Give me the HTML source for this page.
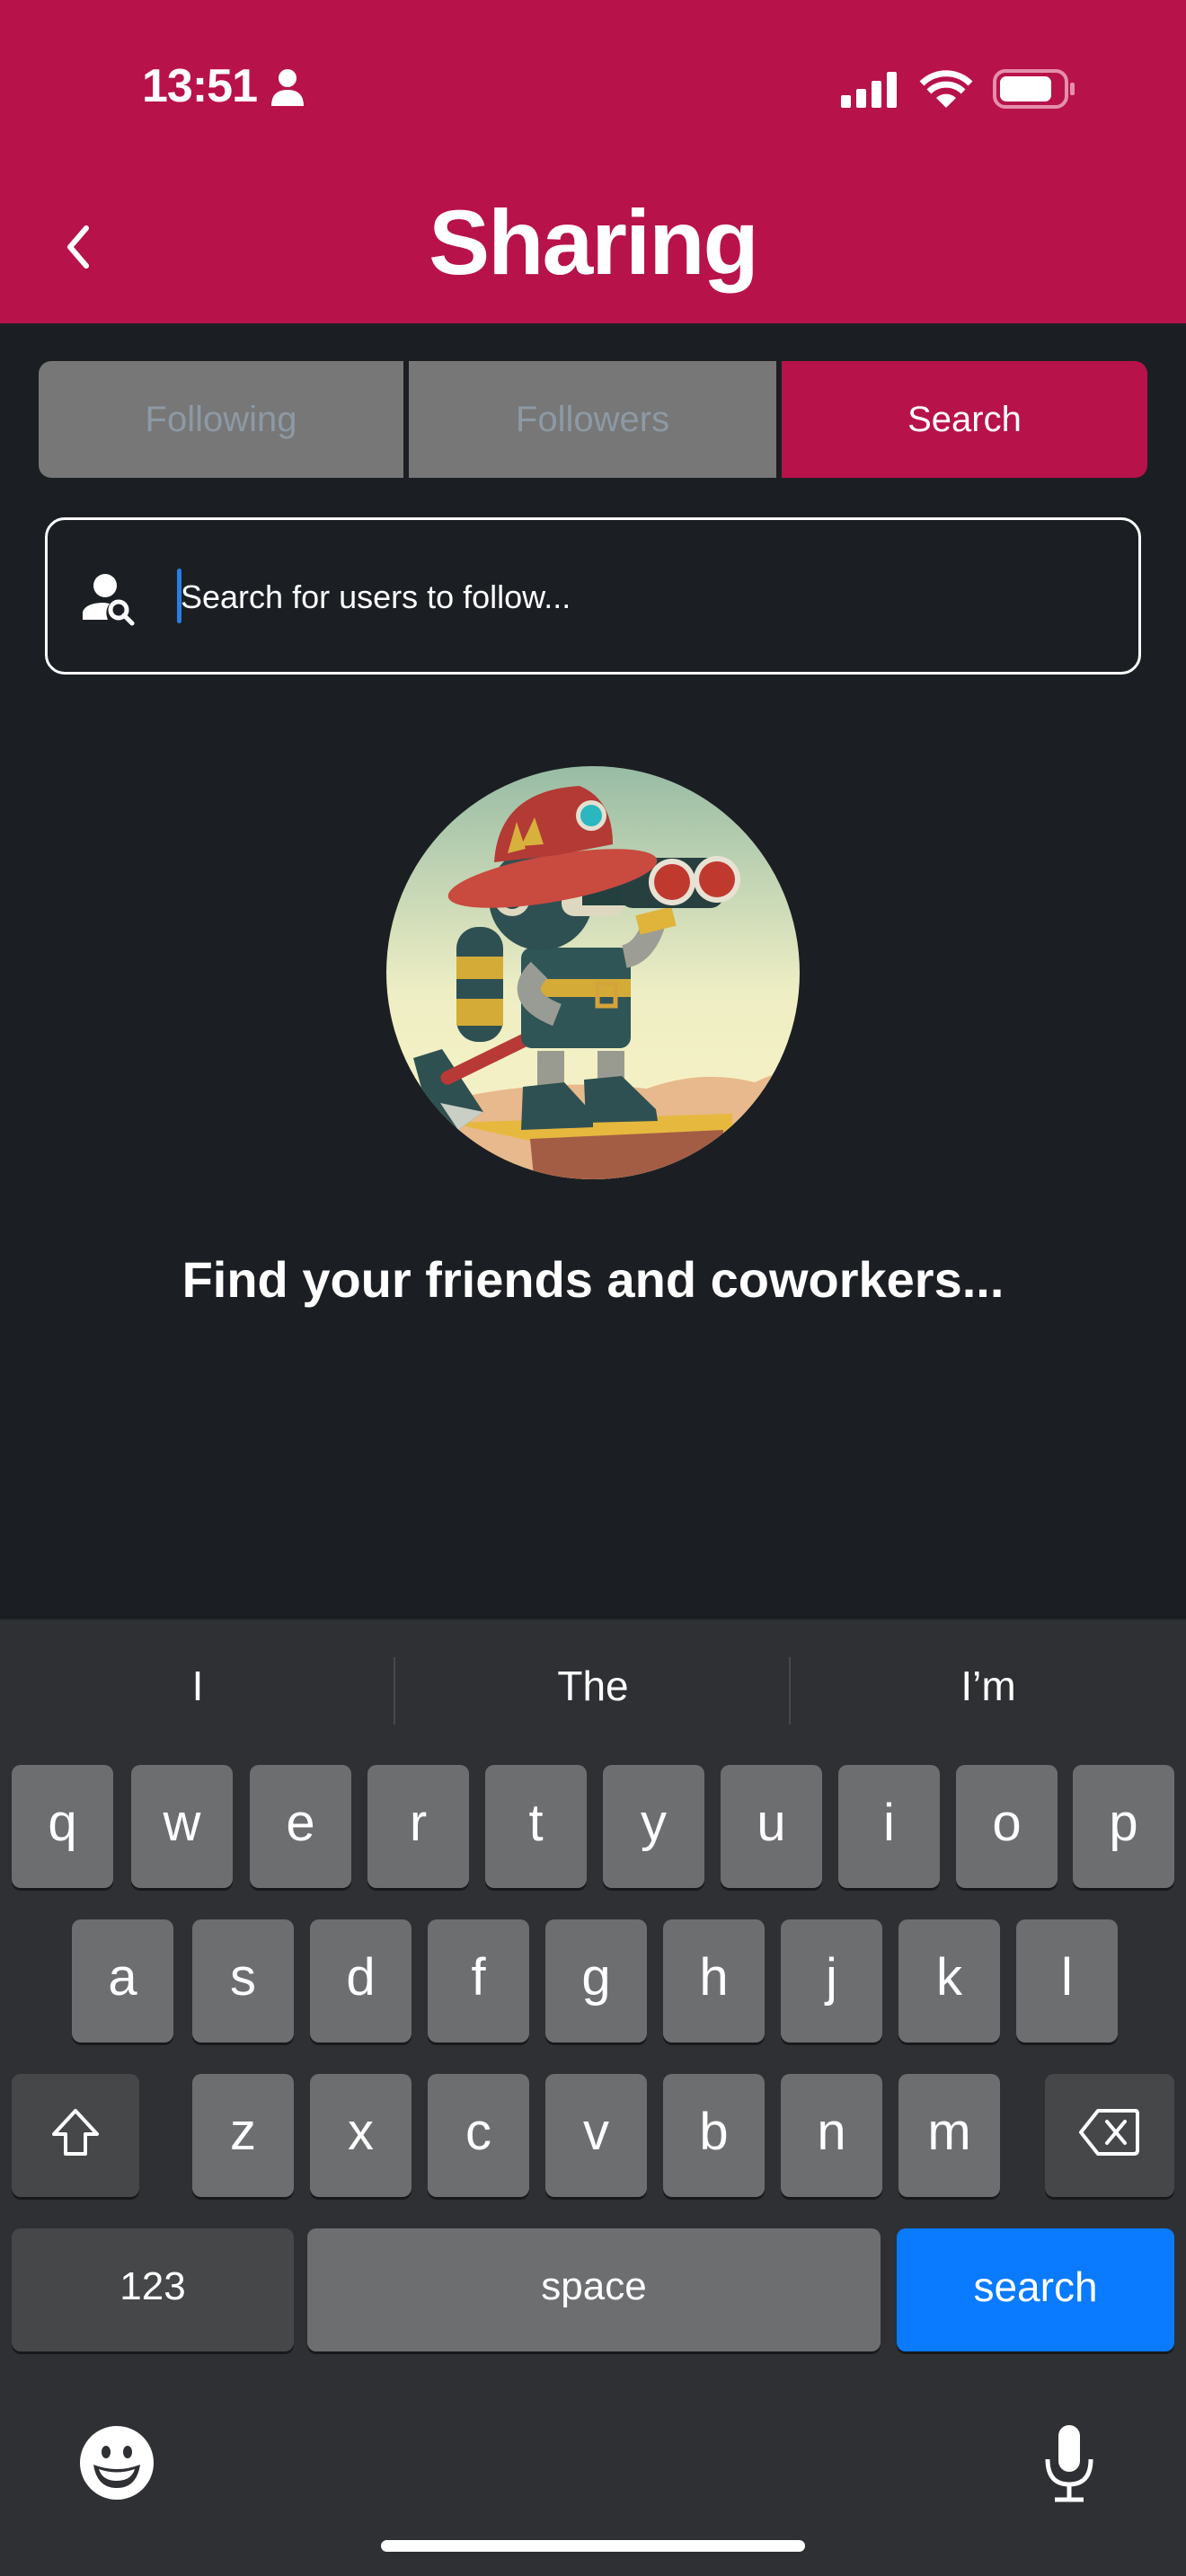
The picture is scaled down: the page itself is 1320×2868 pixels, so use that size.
<!DOCTYPE html>
<html><head><meta charset="utf-8"><style>
*{margin:0;padding:0;box-sizing:border-box}
body{width:1320px;height:2868px;background:#1b1f23;position:relative;overflow:hidden;font-family:"Liberation Sans",sans-serif;color:#fff}
.abs{position:absolute}
.hdr{left:0;top:0;width:1320px;height:360px;background:#b8124a}
.tab{top:402px;height:130px;background:#777;color:#8d99a4;font-size:40px;display:flex;align-items:center;justify-content:center}
.kb{left:0;top:1803px;width:1320px;height:1065px;background:#2e3033}
.k{position:absolute;width:113px;height:137px;background:#6d6e70;border-radius:10px;box-shadow:0 3px 0 #18191b;display:flex;align-items:center;justify-content:center;font-size:58px;color:#fff;padding-bottom:8px}
.sp{background:#464749}
.sug{top:1850px;font-size:46px;color:#fff;width:440px;text-align:center}
</style></head><body>
<div class="abs hdr"></div>
<div class="abs" style="left:158px;top:66px;font-size:52px;font-weight:bold;letter-spacing:-1px">13:51</div>
<svg class="abs" style="left:302px;top:76px" width="36" height="42" viewBox="0 0 36 42"><circle cx="18" cy="11" r="10" fill="#fff"/><path d="M0 42 Q0 24 18 24 Q36 24 36 42Z" fill="#fff"/></svg>
<svg class="abs" style="left:935px;top:76px" width="270" height="46" viewBox="0 0 270 46">
<rect x="1" y="30" width="11" height="14" rx="2" fill="#fff"/><rect x="18" y="23" width="11" height="21" rx="2" fill="#fff"/><rect x="35" y="14" width="11" height="30" rx="2" fill="#fff"/><rect x="52" y="4" width="11" height="40" rx="2" fill="#fff"/>
<path d="M118 44 L107 33 A16 16 0 0 1 129 33Z" fill="#fff"/><path d="M99 26 A27 27 0 0 1 137 26" stroke="#fff" stroke-width="7" fill="none"/><path d="M91 17 A38 38 0 0 1 145 17" stroke="#fff" stroke-width="7" fill="none"/>
<rect x="172" y="3" width="80" height="40" rx="12" fill="none" stroke="#e490ab" stroke-width="4"/><rect x="178" y="9" width="57" height="28" rx="7" fill="#fff"/><rect x="256" y="16" width="5" height="14" rx="2" fill="#e490ab"/>
</svg>
<svg class="abs" style="left:68px;top:250px" width="36" height="50" viewBox="0 0 36 50"><path d="M28 4 L10 25 L28 46" stroke="#fff" stroke-width="6" fill="none" stroke-linecap="round" stroke-linejoin="round"/></svg>
<div class="abs" style="left:0;width:1320px;top:212px;text-align:center;font-size:102px;font-weight:bold;letter-spacing:-2px">Sharing</div>

<div class="abs tab" style="left:43px;width:406px;border-radius:14px 0 0 14px">Following</div>
<div class="abs tab" style="left:455px;width:409px">Followers</div>
<div class="abs tab" style="left:870px;width:407px;background:#b8124a;color:#fff;border-radius:0 14px 14px 0">Search</div>

<div class="abs" style="left:50px;top:576px;width:1220px;height:175px;border:3px solid #fff;border-radius:22px"></div>
<svg class="abs" style="left:88px;top:636px" width="70" height="64" viewBox="0 0 70 64"><circle cx="29" cy="16" r="13" fill="#fff"/><path d="M4 54 L4 45 Q8 35 28 35 L34 36 Q28 44 32 54Z" fill="#fff"/><circle cx="44" cy="43" r="9" fill="none" stroke="#fff" stroke-width="5"/><path d="M50 49 L59 58" stroke="#fff" stroke-width="5" stroke-linecap="round"/></svg>
<div class="abs" style="left:197px;top:633px;width:5px;height:61px;background:#2a7de1;border-radius:3px"></div>
<div class="abs" style="left:201px;top:644px;font-size:36px;color:#fff">Search for users to follow...</div>

<svg class="abs" style="left:420px;top:840px" width="480" height="480" viewBox="0 0 480 480">
<defs><linearGradient id="sky" x1="0" y1="0" x2="0" y2="1"><stop offset="0" stop-color="#93b9a3"/><stop offset="0.55" stop-color="#eeeec4"/><stop offset="1" stop-color="#fbf3c6"/></linearGradient>
<clipPath id="c"><circle cx="240" cy="243" r="230"/></clipPath></defs>
<g clip-path="url(#c)">
<rect width="480" height="480" fill="url(#sky)"/>
<path d="M100 380 Q200 360 300 372 Q360 350 420 365 Q450 350 480 350 L480 480 L0 480Z" fill="#e8b98c"/>
<path d="M80 410 L395 400 L395 420 L170 430Z" fill="#e6b83e"/>
<path d="M170 428 L385 418 L385 480 L175 480Z" fill="#a35d45"/>
<path d="M40 338 L72 328 L118 398 L90 418 L60 412Z" fill="#2f5050"/>
<path d="M70 388 L118 398 L90 418 Z" fill="#c9cfc4"/>
<path d="M78 360 L225 288" stroke="#b83a36" stroke-width="15" stroke-linecap="round"/>
<rect x="88" y="192" width="52" height="128" rx="24" fill="#2f5052"/>
<rect x="88" y="225" width="52" height="25" fill="#d4ab36"/><rect x="88" y="272" width="52" height="30" fill="#d4ab36"/>
<rect x="160" y="215" width="122" height="112" rx="12" fill="#2f5557"/>
<rect x="160" y="250" width="122" height="20" fill="#d4ab36"/>
<rect x="245" y="255" width="20" height="25" fill="none" stroke="#d6a33a" stroke-width="5"/>
<path d="M180 240 Q150 270 200 290" stroke="#999c94" stroke-width="26" fill="none"/>
<rect x="178" y="330" width="30" height="45" fill="#9a9b90"/><rect x="245" y="330" width="30" height="45" fill="#9a9b90"/>
<path d="M162 370 L208 365 L240 400 L240 415 L160 418Z" fill="#2f5052"/>
<path d="M230 362 L272 358 L310 395 L312 408 L232 410Z" fill="#2f5052"/>
<path d="M275 225 Q300 220 310 180" stroke="#9c9d95" stroke-width="26" fill="none"/>
<path d="M290 190 L330 180" stroke="#e0b43b" stroke-width="22"/>
<circle cx="182" cy="160" r="58" fill="#2f5052"/>
<rect x="205" y="125" width="70" height="55" rx="14" fill="#ded8c0"/>
<circle cx="150" cy="160" r="20" fill="#ded8c0"/><circle cx="150" cy="160" r="12" fill="#2a4546"/>
<rect x="228" y="133" width="80" height="35" fill="#23403f"/>
<rect x="270" y="115" width="115" height="56" rx="14" fill="#27403f"/>
<circle cx="328" cy="142" r="26" fill="#e8e2d4"/><circle cx="328" cy="142" r="20" fill="#c0392f"/>
<circle cx="378" cy="139" r="26" fill="#e8e2d4"/><circle cx="378" cy="139" r="20" fill="#c0392f"/>
<ellipse cx="195" cy="138" rx="118" ry="26" transform="rotate(-10 195 138)" fill="#c94a3f"/>
<path d="M130 120 Q135 40 225 35 Q262 50 262 100 L200 112Z" fill="#b33a35"/>
<path d="M145 110 L155 75 L165 105Z M160 102 L175 70 L185 100Z" fill="#d7b13c"/>
<circle cx="238" cy="68" r="17" fill="#e4e0d0"/><circle cx="238" cy="68" r="12" fill="#2bb7c0"/>
</g></svg>

<div class="abs" style="left:0;width:1320px;top:1392px;text-align:center;font-size:56px;font-weight:bold">Find your friends and coworkers...</div>

<div class="abs kb"></div>
<div class="abs sug" style="left:0">I</div>
<div class="abs sug" style="left:440px">The</div>
<div class="abs sug" style="left:880px">I’m</div>
<div class="abs" style="left:438px;top:1845px;width:2px;height:75px;background:#48494c"></div>
<div class="abs" style="left:878px;top:1845px;width:2px;height:75px;background:#48494c"></div>

<div class="k" style="left:13px;top:1965px">q</div><div class="k" style="left:146px;top:1965px">w</div><div class="k" style="left:278px;top:1965px">e</div><div class="k" style="left:409px;top:1965px">r</div><div class="k" style="left:540px;top:1965px">t</div><div class="k" style="left:671px;top:1965px">y</div><div class="k" style="left:802px;top:1965px">u</div><div class="k" style="left:933px;top:1965px">i</div><div class="k" style="left:1064px;top:1965px">o</div><div class="k" style="left:1194px;top:1965px">p</div>
<div class="k" style="left:80px;top:2137px">a</div><div class="k" style="left:214px;top:2137px">s</div><div class="k" style="left:345px;top:2137px">d</div><div class="k" style="left:476px;top:2137px">f</div><div class="k" style="left:607px;top:2137px">g</div><div class="k" style="left:738px;top:2137px">h</div><div class="k" style="left:869px;top:2137px">j</div><div class="k" style="left:1000px;top:2137px">k</div><div class="k" style="left:1131px;top:2137px">l</div>
<div class="k sp" style="left:13px;top:2309px;width:142px"><svg width="60" height="60" viewBox="0 0 60 60"><path d="M30 6 L54 32 L41 32 L41 54 L19 54 L19 32 L6 32Z" fill="none" stroke="#fff" stroke-width="4" stroke-linejoin="round"/></svg></div>
<div class="k" style="left:214px;top:2309px">z</div><div class="k" style="left:345px;top:2309px">x</div><div class="k" style="left:476px;top:2309px">c</div><div class="k" style="left:607px;top:2309px">v</div><div class="k" style="left:738px;top:2309px">b</div><div class="k" style="left:869px;top:2309px">n</div><div class="k" style="left:1000px;top:2309px">m</div>
<div class="k sp" style="left:1163px;top:2309px;width:144px"><svg width="70" height="56" viewBox="0 0 70 56"><path d="M22 4 L64 4 Q66 4 66 8 L66 48 Q66 52 62 52 L22 52 L3 28Z" fill="none" stroke="#fff" stroke-width="4" stroke-linejoin="round"/><path d="M32 16 L52 40 M52 16 L32 40" stroke="#fff" stroke-width="4" stroke-linecap="round"/></svg></div>
<div class="k sp" style="left:13px;top:2481px;width:314px;font-size:44px">123</div>
<div class="k" style="left:342px;top:2481px;width:638px;font-size:44px">space</div>
<div class="k" style="left:998px;top:2481px;width:309px;background:#0a7aff;font-size:46px">search</div>

<svg class="abs" style="left:88px;top:2700px" width="84" height="84" viewBox="0 0 84 84"><circle cx="42" cy="42" r="41" fill="#fff"/><ellipse cx="30" cy="30" rx="5" ry="7" fill="#2e3033"/><ellipse cx="54" cy="30" rx="5" ry="7" fill="#2e3033"/><path d="M16 44 Q42 54 68 44 Q64 70 42 70 Q20 70 16 44Z" fill="#2e3033"/><path d="M22 49 Q42 56 62 49 Q58 62 42 62 Q26 62 22 49Z" fill="#fff"/></svg>
<svg class="abs" style="left:1160px;top:2698px" width="60" height="90" viewBox="0 0 60 90"><rect x="18" y="2" width="24" height="52" rx="12" fill="#fff"/><path d="M6 40 Q6 68 30 68 Q54 68 54 40" stroke="#fff" stroke-width="5" fill="none"/><path d="M30 68 L30 84 M14 85 L46 85" stroke="#fff" stroke-width="5"/></svg>
<div class="abs" style="left:424px;top:2828px;width:472px;height:13px;background:#fff;border-radius:7px"></div>
</body></html>
